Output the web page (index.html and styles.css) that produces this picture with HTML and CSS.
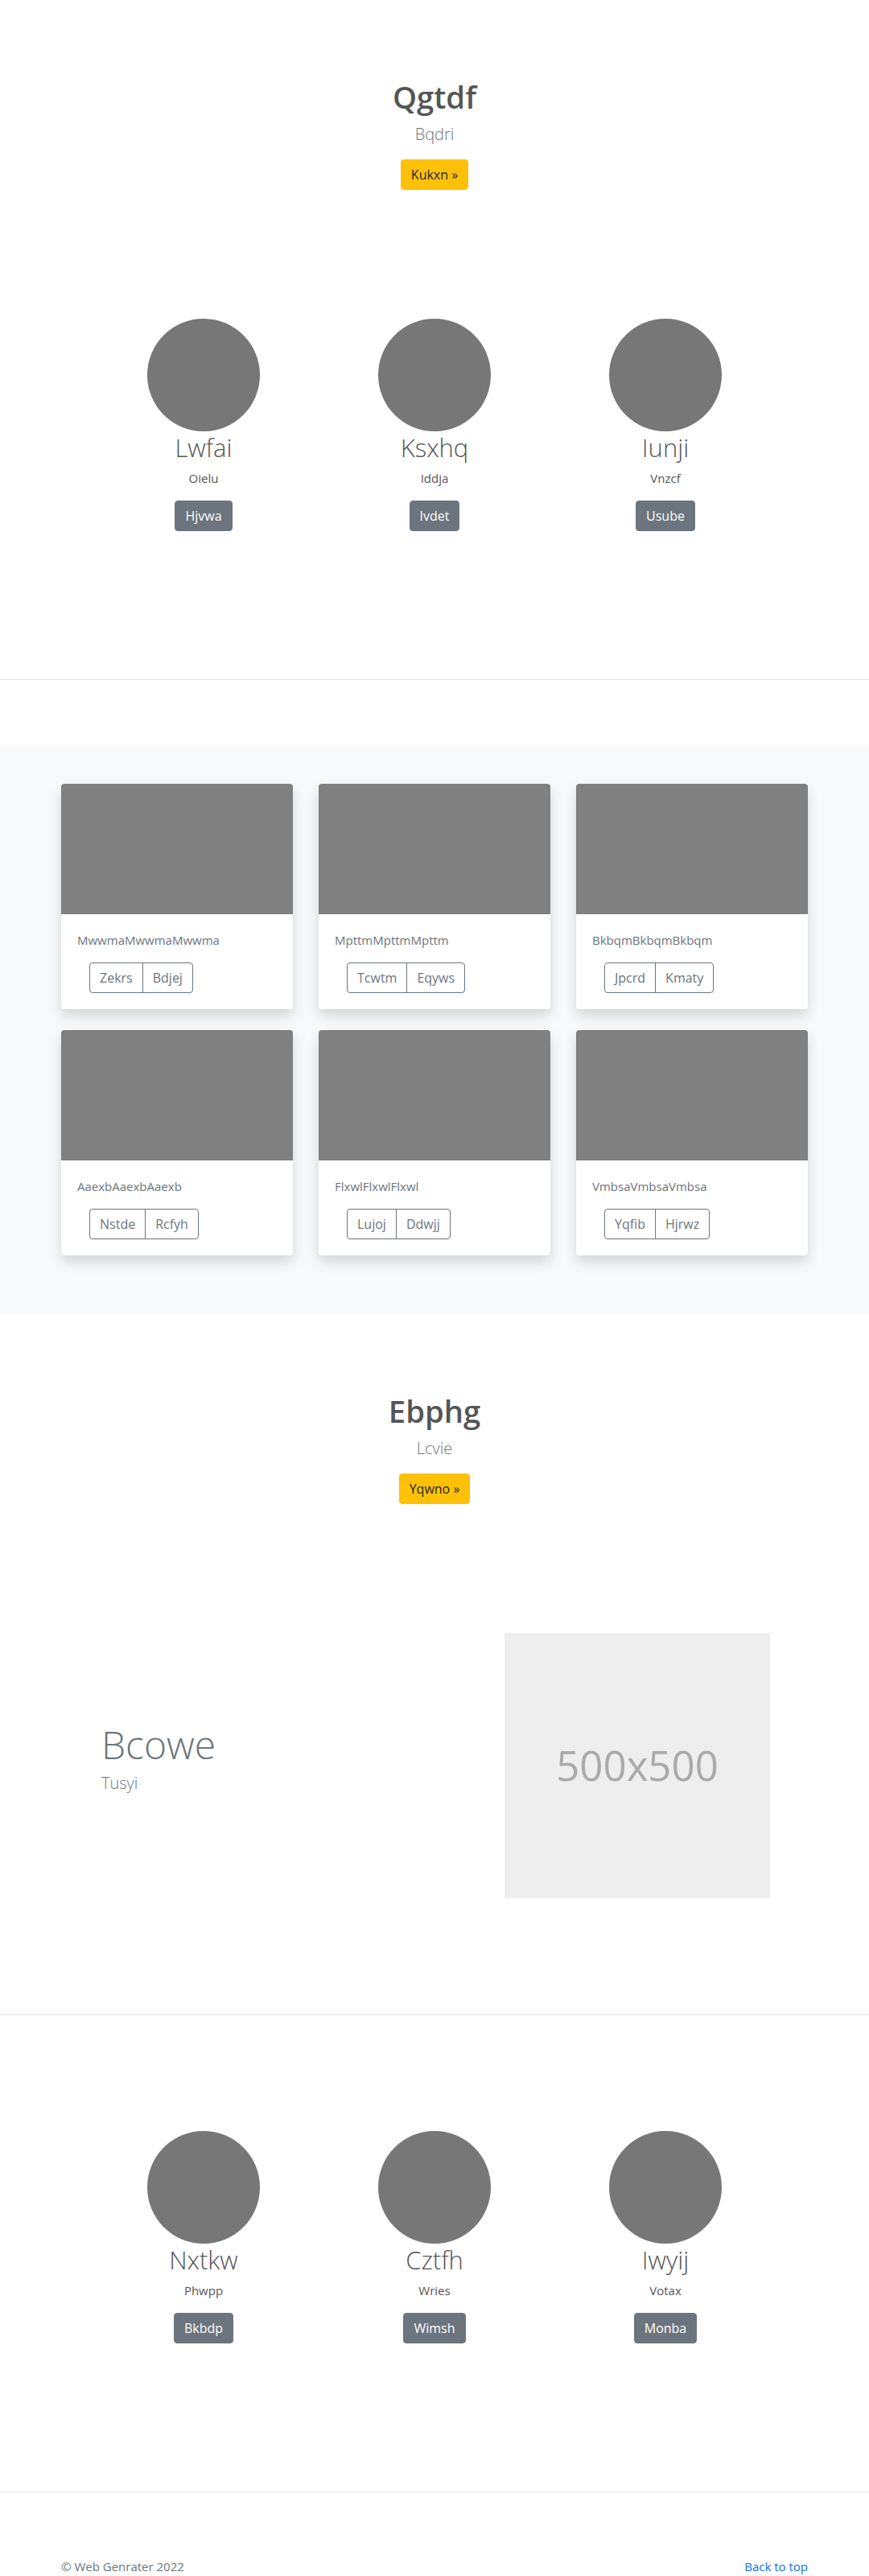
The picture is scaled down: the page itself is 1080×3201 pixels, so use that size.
FILE: index.html
```html
<!DOCTYPE html>
<html lang="en">
<head>
<meta charset="utf-8">
<title>Qgtdf</title>
<link rel="stylesheet" href="styles.css">
</head>
<body>
<section class="hero">
  <h1 class="hero-title">Qgtdf</h1>
  <p class="lead">Bqdri</p>
  <a class="btn btn-warning" href="#">Kukxn »</a>
</section>

<section class="team team-first">
  <div class="team-grid">
    <div class="member">
      <div class="avatar"></div>
      <h2 class="member-name">Lwfai</h2>
      <p class="member-role">Oielu</p>
      <p class="member-action"><a class="btn btn-secondary" href="#">Hjvwa</a></p>
    </div>
    <div class="member">
      <div class="avatar"></div>
      <h2 class="member-name">Ksxhq</h2>
      <p class="member-role">Iddja</p>
      <p class="member-action"><a class="btn btn-secondary" href="#">Ivdet</a></p>
    </div>
    <div class="member">
      <div class="avatar"></div>
      <h2 class="member-name">Iunji</h2>
      <p class="member-role">Vnzcf</p>
      <p class="member-action"><a class="btn btn-secondary" href="#">Usube</a></p>
    </div>
  </div>
</section>

<hr class="divider">

<section class="album">
  <div class="album-grid">
    <div class="card">
      <div class="card-img"></div>
      <div class="card-body">
        <p class="card-text">MwwmaMwwmaMwwma</p>
        <div class="btn-group"><a class="btn btn-outline" href="#">Zekrs</a><a class="btn btn-outline" href="#">Bdjej</a></div>
      </div>
    </div>
    <div class="card">
      <div class="card-img"></div>
      <div class="card-body">
        <p class="card-text">MpttmMpttmMpttm</p>
        <div class="btn-group"><a class="btn btn-outline" href="#">Tcwtm</a><a class="btn btn-outline" href="#">Eqyws</a></div>
      </div>
    </div>
    <div class="card">
      <div class="card-img"></div>
      <div class="card-body">
        <p class="card-text">BkbqmBkbqmBkbqm</p>
        <div class="btn-group"><a class="btn btn-outline" href="#">Jpcrd</a><a class="btn btn-outline" href="#">Kmaty</a></div>
      </div>
    </div>
    <div class="card">
      <div class="card-img"></div>
      <div class="card-body">
        <p class="card-text">AaexbAaexbAaexb</p>
        <div class="btn-group"><a class="btn btn-outline" href="#">Nstde</a><a class="btn btn-outline" href="#">Rcfyh</a></div>
      </div>
    </div>
    <div class="card">
      <div class="card-img"></div>
      <div class="card-body">
        <p class="card-text">FlxwlFlxwlFlxwl</p>
        <div class="btn-group"><a class="btn btn-outline" href="#">Lujoj</a><a class="btn btn-outline" href="#">Ddwjj</a></div>
      </div>
    </div>
    <div class="card">
      <div class="card-img"></div>
      <div class="card-body">
        <p class="card-text">VmbsaVmbsaVmbsa</p>
        <div class="btn-group"><a class="btn btn-outline" href="#">Yqfib</a><a class="btn btn-outline" href="#">Hjrwz</a></div>
      </div>
    </div>
  </div>
</section>

<section class="hero">
  <h1 class="hero-title">Ebphg</h1>
  <p class="lead">Lcvie</p>
  <a class="btn btn-warning" href="#">Yqwno »</a>
</section>

<section class="feature">
  <div class="feature-inner">
    <div class="feature-text">
      <h2 class="feature-title">Bcowe</h2>
      <p class="lead">Tusyi</p>
    </div>
    <div class="placeholder"><span class="placeholder-label">500x500</span></div>
  </div>
</section>

<hr class="divider">

<section class="team team-second">
  <div class="team-grid">
    <div class="member">
      <div class="avatar"></div>
      <h2 class="member-name">Nxtkw</h2>
      <p class="member-role">Phwpp</p>
      <p class="member-action"><a class="btn btn-secondary" href="#">Bkbdp</a></p>
    </div>
    <div class="member">
      <div class="avatar"></div>
      <h2 class="member-name">Cztfh</h2>
      <p class="member-role">Wries</p>
      <p class="member-action"><a class="btn btn-secondary" href="#">Wimsh</a></p>
    </div>
    <div class="member">
      <div class="avatar"></div>
      <h2 class="member-name">Iwyij</h2>
      <p class="member-role">Votax</p>
      <p class="member-action"><a class="btn btn-secondary" href="#">Monba</a></p>
    </div>
  </div>
</section>

<hr class="divider">

<footer class="footer">
  <div class="footer-inner">
    <p class="copyright">© Web Genrater 2022</p>
    <a class="back-top" href="#">Back to top</a>
  </div>
</footer>
</body>
</html>
```

FILE: styles.css
```css
* { box-sizing: border-box; }

html, body {
  margin: 0;
  padding: 0;
  background: #fff;
}

body {
  font-family: "Segoe UI", "Open Sans", "Noto Sans", sans-serif;
  font-size: 16px;
  line-height: 1.5;
  color: #555;
}

a { text-decoration: none; }

.btn {
  display: inline-block;
  padding: 6px 12px;
  font-size: 16px;
  line-height: 24px;
  border: 1px solid transparent;
  border-radius: 4px;
  text-align: center;
  white-space: nowrap;
}

.btn-warning {
  background: #ffc107;
  border-color: #ffc107;
  color: #212529;
}

.btn-secondary {
  background: #6c757d;
  border-color: #6c757d;
  color: #fff;
}

.btn-outline {
  background: transparent;
  border-color: #6c757d;
  color: #6c757d;
}

/* hero */
.hero {
  text-align: center;
  padding: 98px 0 80px;
}

.hero-title {
  margin: 0 0 8px;
  font-size: 38.2px;
  line-height: 1.2;
  font-weight: 600;
  color: #555;
}

.lead {
  margin: 0 0 16px;
  font-size: 20px;
  line-height: 30px;
  font-weight: 300;
  color: #6c757d;
}

/* team */
.team-first { padding: 80px 0 168px; }
.team-second { padding: 144px 0 168px; }

.team-grid {
  display: grid;
  grid-template-columns: repeat(3, 287px);
  justify-content: center;
  text-align: center;
}

.avatar {
  width: 140px;
  height: 140px;
  border-radius: 50%;
  background: #777;
  margin: 0 auto 2px;
}

.member-name {
  margin: 0 0 7px;
  font-size: 31px;
  line-height: 1.2;
  font-weight: 300;
  color: #555;
}

.member-role {
  margin: 0 0 16px;
  font-size: 15px;
  line-height: 24px;
  color: #555;
}

.member-action { margin: 0 0 16px; }

.divider {
  margin: 0;
  border: 0;
  border-top: 1px solid #e3e3e3;
  height: 0;
}

/* album */
.album {
  margin-top: 80px;
  background: #f8f9fa;
  padding: 49px 0 73px;
}

.album-grid {
  display: grid;
  grid-template-columns: repeat(3, 288px);
  column-gap: 32px;
  row-gap: 26px;
  justify-content: center;
}

.card {
  background: #fff;
  border-radius: 4px;
  overflow: hidden;
  box-shadow: 0 8px 16px rgba(0, 0, 0, 0.15);
}

.card-img {
  height: 162px;
  background: #808080;
}

.card-body {
  padding: 20px;
}

.card-text {
  margin: 0 0 16px;
  font-size: 15px;
  line-height: 24px;
  color: #6c757d;
}

.btn-group {
  display: inline-flex;
  margin-left: 15px;
}

.btn-group .btn:first-child {
  border-radius: 4px 0 0 4px;
}

.btn-group .btn + .btn {
  margin-left: -1px;
  border-radius: 0 4px 4px 0;
}

/* feature */
.feature {
  padding: 80px 0 144px;
}

.feature-inner {
  width: 928px;
  margin: 0 auto;
  display: grid;
  grid-template-columns: 551px 330px;
  align-items: center;
}

.feature-text {
  padding: 0 0 2px 50px;
}

.feature-title {
  margin: 0 0 4px;
  font-size: 48px;
  line-height: 1.2;
  font-weight: 300;
  color: #6c757d;
}

.placeholder {
  width: 330px;
  height: 330px;
  background: #eee;
  display: flex;
  align-items: center;
  justify-content: center;
}

.placeholder-label {
  font-size: 51px;
  color: #aaa;
  line-height: 1;
}

/* footer */
.footer {
  padding-top: 80px;
}

.footer-inner {
  width: 928px;
  margin: 0 auto;
  display: flex;
  justify-content: space-between;
  align-items: baseline;
}

.copyright {
  margin: 0;
  font-size: 15px;
  line-height: 24px;
  color: #6c757d;
}

.back-top {
  font-size: 15px;
  line-height: 24px;
  color: #0d6efd;
}
```
